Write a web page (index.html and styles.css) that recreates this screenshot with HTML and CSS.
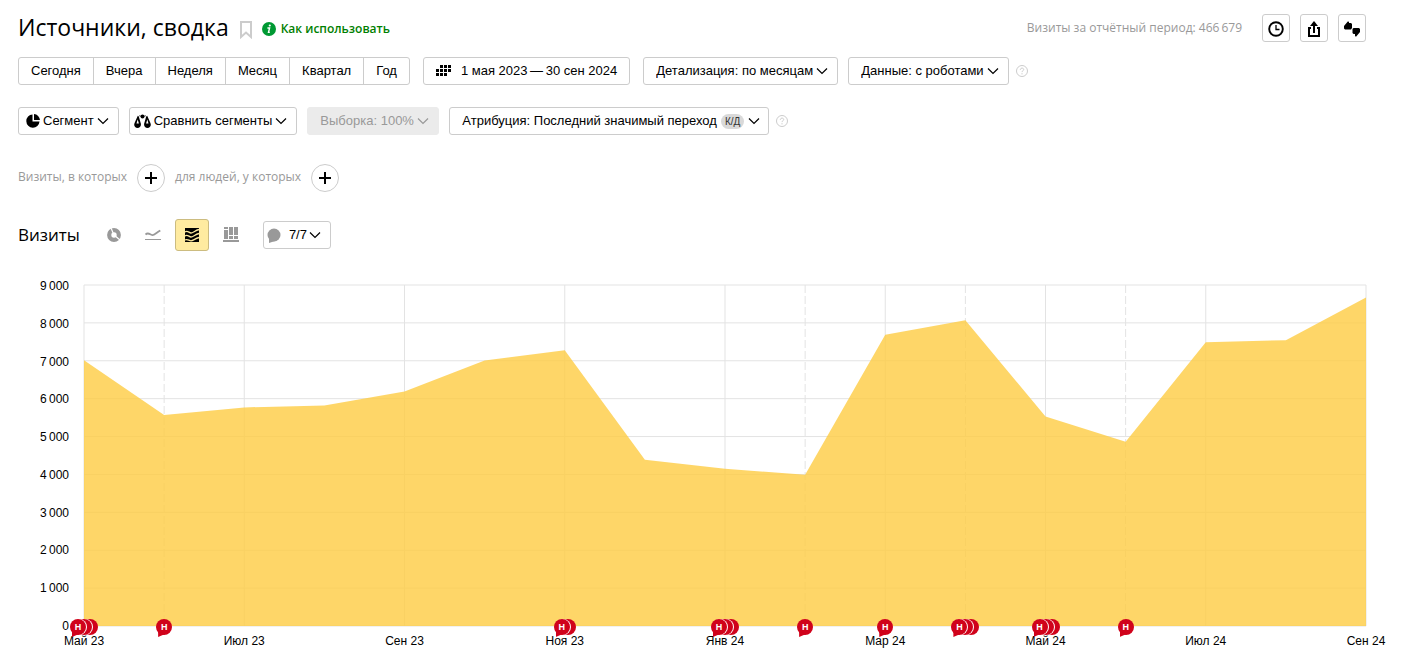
FILE: index.html
```html
<!DOCTYPE html>
<html lang="ru">
<head>
<meta charset="utf-8">
<meta name="viewport" content="width=device-width, initial-scale=1">
<title>Источники, сводка</title>
<link rel="stylesheet" href="styles.css">
</head>
<body>
<svg class="defs" aria-hidden="true">
  <symbol id="chevron" viewBox="0 0 12 12"><path d="M1 3.500l5 5 5-5" fill="none" stroke="currentColor" stroke-width="1.200"/></symbol>
  <symbol id="plus" viewBox="0 0 12 12"><path d="M6 0v12M0 6h12" stroke="currentColor" stroke-width="2"/></symbol>
  <symbol id="help" viewBox="0 0 12 12"><circle cx="6" cy="6" r="5.500" fill="none" stroke="currentColor"/><path d="M4.300 4.800c0-2.200 3.400-2.200 3.400-.2 0 1.200-1.700 1.100-1.700 2.500M6 8.200v1.200" fill="none" stroke="currentColor"/></symbol>
</svg>
<main class="page">
  <header class="header">
    <h1 class="title">Источники, сводка</h1>
    <button class="plain bookmark" aria-label="В избранное"><svg width="12" height="18" viewBox="0 0 12 18"><path d="M1 1h10v15l-5-4.500L1 16z" fill="none" stroke="#ccc" stroke-width="2"/></svg></button>
    <a class="howto" href="#howto">
      <svg width="14" height="14" viewBox="0 0 14 14"><circle cx="7" cy="7" r="7" fill="#093"/><circle cx="7.800" cy="3.500" r="1.100" fill="#fff"/><path d="M5.400 6h2.200l-1.100 4.400h1.300" fill="none" stroke="#fff" stroke-width="1.400"/></svg>
      Как использовать</a>
    <p class="total">Визиты за отчётный период: 466&#8201;679</p>
    <div class="actions">
      <button class="box square" aria-label="История"><svg width="16" height="16" viewBox="0 0 16 16" fill="none" stroke="#000"><circle cx="8" cy="8" r="6.800" stroke-width="1.900"/><path d="M8 4v4.500h3.500" stroke-width="1.300"/></svg></button>
      <button class="box square" aria-label="Экспорт"><svg width="14" height="18" viewBox="0 0 14 18"><path d="M4 8H2v8h10V8h-2M7 13V4" fill="none" stroke="#000" stroke-width="2"/><path d="M7 1l4 5H3z"/></svg></button>
      <button class="box square" aria-label="Отзыв"><svg width="16" height="16" viewBox="0 0 16 16"><path d="M0 5L4 .3l1 .7v1h2l1 1v4L7 8.500H1L0 7.500z"/><path d="M16 11L12 15.700l-1-.7v-2H9.500l-1-1V8l1-1H15l1 1z"/></svg></button>
    </div>
  </header>

  <div class="row periods">
    <div class="segments">
      <button>Сегодня</button><button>Вчера</button><button>Неделя</button><button>Месяц</button><button>Квартал</button><button>Год</button>
    </div>
    <button class="box dates"><svg width="16" height="12" viewBox="0 0 16 12"><path d="M4 0h3v3H4zM8 0h3v3H8zM12 0h3v3h-3zM0 4h3v3H0zM4 4h3v3H4zM8 4h3v3H8zM12 4h3v3h-3zM0 8h3v3H0zM4 8h3v3H4zM8 8h3v3H8z"/></svg>1 мая 2023&#8201;—&#8201;30 сен 2024</button>
    <div class="group">
      <span class="select"><select aria-label="Детализация"><option>Детализация: по месяцам</option></select><svg class="chevron"><use href="#chevron"/></svg></span>
      <span class="select"><select aria-label="Данные"><option>Данные: с роботами</option></select><svg class="chevron"><use href="#chevron"/></svg></span>
      <button class="plain help" aria-label="Справка"><svg width="12" height="12"><use href="#help"/></svg></button>
    </div>
  </div>

  <div class="row filters">
    <button class="box menu"><svg width="14" height="14" viewBox="0 0 14 14"><path d="M6.500 .5a6.600 6.600 0 1 0 7 7h-7z"/><path d="M8 0a6.500 6.500 0 0 1 6 6H8z"/></svg>Сегмент<svg class="chevron"><use href="#chevron"/></svg></button>
    <button class="box menu compare"><svg width="17" height="14" viewBox="0 0 17 14"><path d="M3.800 1.800L.8 8.500C-.8 11.500 1 14 3.500 14s4.300-2.500 3-5.500L4.800 2.600z"/><path d="M13.200 1.800l3 6.700c1.600 3-.2 5.500-2.700 5.500s-4.300-2.500-3-5.500l1.700-5.900z"/><circle cx="8.500" cy="2.500" r="2"/><path d="M5 1.700l3.500 .8 3.500-.8" fill="none" stroke="#000" stroke-width=".6"/><path d="M3.700 5.500L2.500 9.500h2.400zM13.300 5.500l-1.200 4h2.400z" fill="#fff"/></svg>Сравнить сегменты<svg class="chevron"><use href="#chevron"/></svg></button>
    <span class="select disabled"><select aria-label="Выборка" disabled><option>Выборка: 100%</option></select><svg class="chevron"><use href="#chevron"/></svg></span>
    <button class="box attribution">Атрибуция: Последний значимый переход <span class="badge">К/Д</span><svg class="chevron"><use href="#chevron"/></svg></button>
    <button class="plain help" aria-label="Справка"><svg width="12" height="12"><use href="#help"/></svg></button>
  </div>

  <div class="row conditions">
    <span>Визиты, в которых</span>
    <button class="round" aria-label="Добавить условие для визитов"><svg width="12" height="12"><use href="#plus"/></svg></button>
    <span>для людей, у которых</span>
    <button class="round" aria-label="Добавить условие для людей"><svg width="12" height="12"><use href="#plus"/></svg></button>
  </div>

  <section>
    <div class="row chart-head">
      <h2 class="subtitle">Визиты</h2>
      <div class="views">
        <button class="view" aria-label="Круговая диаграмма"><svg width="14" height="14" viewBox="0 0 14 14" fill="none"><circle cx="7" cy="7" r="4.800" stroke="#999" stroke-width="4.200"/><path d="M7 7L4 0M7 7l6 5" stroke="#fff" stroke-width="1.200"/></svg></button>
        <button class="view" aria-label="Линии"><svg width="16" height="12" viewBox="0 0 16 12" fill="none" stroke="#999"><path d="M.5 5.500C3 3 5 5.500 7 6S11 4 15.300 1.500" stroke-width="1.800"/><path d="M0 10.500h16"/></svg></button>
        <button class="view active" aria-label="Области" aria-pressed="true"><svg width="16" height="16" viewBox="0 0 16 16"><path d="M1 1h14v14H1z"/><path d="M1 5c2.500-2 4 1 6 1S11 3.500 15 2.500M1 9c2.500-2 4 1 6 1s4-2.500 8-3.500M1 13c2.500-1.500 4 .8 6 .8s4-2.300 8-3.300" fill="none" stroke="#ffeba0" stroke-width="1.300"/></svg></button>
        <button class="view" aria-label="Столбцы"><svg width="16" height="16" viewBox="0 0 16 16" fill="#999"><path d="M0 13h16v2H0zM1 0h4v2H1zM1 3h4v9H1zM6 0h4v8H6zM6 9h4v3H6zM11 0h4v8h-4zM11 9h4v3h-4z"/></svg></button>
      </div>
      <button class="box notes"><svg width="14" height="15" viewBox="0 0 14 15" fill="#999"><circle cx="7" cy="7" r="6.500"/><path d="M2 10v5l6-2z"/></svg>7/7<svg class="chevron"><use href="#chevron"/></svg></button>
    </div>

    <div class="chart">
      <ol class="y-axis"><li>9&#8201;000</li><li>8&#8201;000</li><li>7&#8201;000</li><li>6&#8201;000</li><li>5&#8201;000</li><li>4&#8201;000</li><li>3&#8201;000</li><li>2&#8201;000</li><li>1&#8201;000</li><li>0</li></ol>
      <div class="plot">
        <svg class="area" viewBox="0 0 1600 9000" preserveAspectRatio="none" role="img" aria-label="Визиты по месяцам">
          <path class="grid" d="M0 0H1600M0 1000H1600M0 2000H1600M0 3000H1600M0 4000H1600M0 5000H1600M0 6000H1600M0 7000H1600M0 8000H1600M0 9000H1600"/>
          <path class="grid" d="M0 0V9000M200 0V9000M400 0V9000M600 0V9000M800 0V9000M1000 0V9000M1200 0V9000M1400 0V9000M1600 0V9000"/>
          <path class="grid dashed" d="M100 0V9000M900 0V9000M1100 0V9000M1300 0V9000"/>
          <path class="fill" d="M0 9000V1985L100 3430 200 3230 300 3180 400 2810 500 1990 600 1720 700 4610 800 4850 900 5010 1000 1310 1100 930 1200 3470 1300 4140 1400 1510 1500 1455 1600 330V9000z"/>
        </svg>
        <div class="axis pins">
          <span class="pin-group m0"><b>Н</b><i></i><i></i></span>
          <span class="pin-group m1"><b>Н</b></span>
          <span class="pin-group m6"><b>Н</b><i></i></span>
          <span class="pin-group m8"><b>Н</b><i></i><i></i></span>
          <span class="pin-group m9"><b>Н</b></span>
          <span class="pin-group m10"><b>Н</b></span>
          <span class="pin-group m11"><b>Н</b><i></i><i></i></span>
          <span class="pin-group m12"><b>Н</b><i></i><i></i></span>
          <span class="pin-group m13"><b>Н</b></span>
        </div>
        <div class="axis labels">
          <span class="m0">Май 23</span><span class="m2">Июл 23</span><span class="m4">Сен 23</span><span class="m6">Ноя 23</span><span class="m8">Янв 24</span><span class="m10">Мар 24</span><span class="m12">Май 24</span><span class="m14">Июл 24</span><span class="m16">Сен 24</span>
        </div>
      </div>
    </div>
  </section>
</main>
</body>
</html>
```
FILE: styles.css
```css
* { box-sizing: border-box; }
body {
  margin: 0;
  background: #fff;
  color: #000;
  font: 13px/16px "Liberation Sans", Arial, sans-serif;
}
.defs { position: absolute; width: 0; height: 0; }
.page { padding: 14px 37px 16px 18px; overflow-x: clip; }
button, select { font: inherit; color: inherit; cursor: pointer; }
button { padding: 0; white-space: nowrap; }
svg { flex: none; display: block; }
h1, h2, p, ol { margin: 0; padding: 0; }
.plain { border: 0; background: none; }
.row { display: flex; align-items: center; }

.header { display: flex; align-items: center; height: 28px; }
.title { font: 400 23px/26px "Open Sans", sans-serif; white-space: nowrap; padding-bottom: 2px; }
.bookmark { margin: 4px 10px 0 11px; }
.howto {
  display: flex; align-items: center; gap: 5px;
  color: #008000; font: 600 12px/16px "Open Sans", sans-serif;
  text-decoration: none; white-space: nowrap; padding-top: 2px;
}
.total { margin-left: auto; color: #999; font: 12px/16px "Open Sans", sans-serif; }
.actions { display: flex; gap: 10px; margin-left: 20px; }

.box {
  display: flex; align-items: center;
  height: 28px; border: 1px solid #ccc; border-radius: 3px; background: #fff;
}
.square { width: 28px; justify-content: center; padding-top: 1px; }
.chevron { width: 12px; height: 12px; }

.periods { margin-top: 15px; gap: 13px; }
.segments { display: flex; height: 28px; border: 1px solid #ccc; border-radius: 3px; }
.segments button { border: 0; background: none; padding: 0 12px; }
.segments button + button { border-left: 1px solid #ccc; }
.dates { padding: 0 12px; gap: 9px; }
.group { display: flex; align-items: center; gap: 10px; }
.select {
  display: grid; align-items: center; height: 28px;
  border: 1px solid #ccc; border-radius: 3px;
}
.select select {
  grid-area: 1 / 1; appearance: none; border: 0; background: none;
  height: 26px; padding: 0 24px 0 12px;
}
.select .chevron { grid-area: 1 / 1; justify-self: end; margin-right: 9px; pointer-events: none; }
.disabled { background: #ebebeb; border-color: #ebebeb; color: #999; }
.disabled select { opacity: 1; }
.help { color: #ccc; margin-left: -3px; }

.filters { margin-top: 22px; gap: 10px; }
.menu { padding: 0 9px 0 7px; gap: 3px; }
.compare { padding-left: 4px; }
.attribution { padding: 0 8px 0 12px; gap: 4px; }
.badge { padding: 0 4px; border-radius: 8px; background: #d9d9d9; color: #333; font-size: 10px; line-height: 15px; }

.conditions { margin-top: 29px; color: #999; font: 12px/16px "Open Sans", sans-serif; gap: 10px; }
.conditions span { padding-bottom: 3px; }
.round {
  display: grid; place-items: center; width: 28px; height: 28px;
  border: 1px solid #ccc; border-radius: 50%; background: #fff; color: #000;
}

.chart-head { margin-top: 27px; }
.subtitle { font: 400 17px/24px "Open Sans", sans-serif; }
.views { display: flex; gap: 5px; margin: 0 15px 0 17px; }
.view {
  display: grid; place-items: center; width: 34px; height: 32px;
  border: 1px solid transparent; border-radius: 3px; background: none;
}
.view.active { background: #ffeba0; border-color: #ccbc80; }
.notes { padding: 0 9px 0 3px; }
.notes svg:first-child { margin-right: 8px; }
.notes .chevron { margin-left: 2px; }

.chart { display: flex; margin-top: 34px; gap: 15px; font-size: 12px; line-height: 14px; }
.y-axis {
  display: flex; flex-direction: column; justify-content: space-between;
  width: 51px; height: 354px; margin-top: -6px;
  list-style: none; text-align: right;
}
.plot { flex: 1; min-width: 0; }
.area { width: 100%; height: 341px; overflow: visible; }
.grid { fill: none; stroke: #e3e3e3; vector-effect: non-scaling-stroke; shape-rendering: crispEdges; }
.dashed { stroke-dasharray: 8 3; }
.fill { fill: #fecc42; fill-opacity: .8; }
.axis {
  display: grid; grid-template-columns: repeat(17, minmax(0, 1fr));
  margin: 0 -3.125%; justify-items: center; white-space: nowrap;
}
.axis > * { grid-row: 1; }
.pins { position: relative; z-index: 1; height: 16px; margin-top: -7px; }
.labels { margin-top: -1px; }
.pin-group { display: flex; }
.pin-group b, .pin-group i { width: 16px; height: 16px; border-radius: 50%; background: #d0021b; }
.pin-group b {
  position: relative; z-index: 3; color: #fff;
  font: 700 9px/16px "Liberation Sans", Arial, sans-serif; text-align: center;
}
.pin-group b::after {
  content: ""; position: absolute; left: 2px; bottom: -2px;
  width: 7px; height: 6px; background: #d0021b;
  clip-path: polygon(0 0, 0 100%, 100% 50%);
}
.pin-group i { position: relative; z-index: 2; margin-left: -10px; }
.pin-group i + i { z-index: 1; }
.pin-group :not(:last-child) { box-shadow: 1px 0 0 #fff; }
.m0 { grid-column: 1; }
.m1 { grid-column: 2; }
.m2 { grid-column: 3; }
.m4 { grid-column: 5; }
.m6 { grid-column: 7; }
.m8 { grid-column: 9; }
.m9 { grid-column: 10; }
.m10 { grid-column: 11; }
.m11 { grid-column: 12; }
.m12 { grid-column: 13; }
.m13 { grid-column: 14; }
.m14 { grid-column: 15; }
.m16 { grid-column: 17; }
```
